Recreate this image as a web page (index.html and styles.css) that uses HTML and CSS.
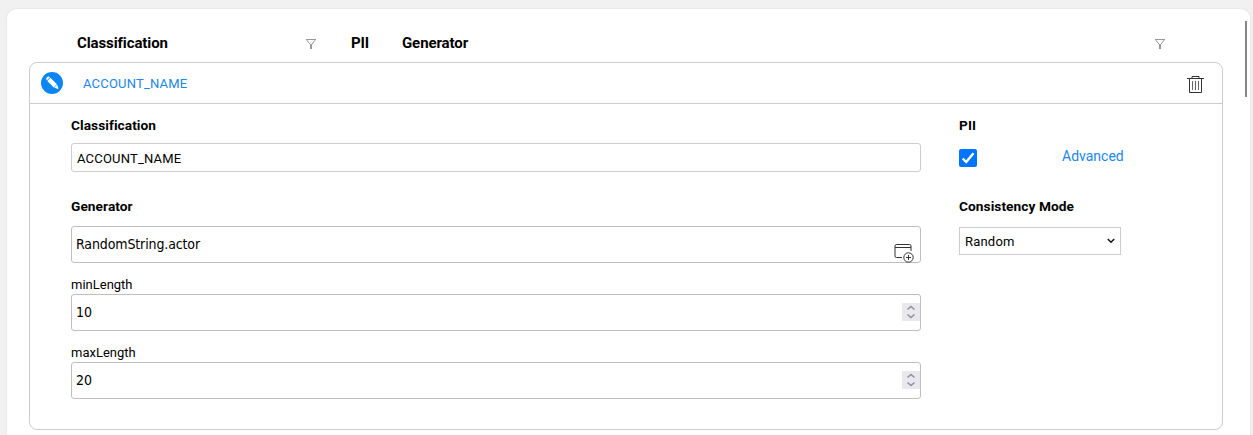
FILE: index.html
```
<!DOCTYPE html>
<html lang="en">

<head>
    <meta charset="UTF-8">
    <title>Classifications</title>
    <link rel="stylesheet" href="styles.css">
</head>

<body>
    <div class="panel">
        <div class="table-head">
            <span class="head-classification">Classification</span>
            <svg class="filter" viewBox="0 0 10 11"><path d="M0 .5h10M.8 1L4.2 5.5M9.2 1L5.8 5.5" /><path class="stem" d="M5 5V10" /></svg>
            <span class="head-pii">PII</span>
            <span class="head-generator">Generator</span>
            <svg class="filter" viewBox="0 0 10 11"><path d="M0 .5h10M.8 1L4.2 5.5M9.2 1L5.8 5.5" /><path class="stem" d="M5 5V10" /></svg>
        </div>
        <div class="item">
            <div class="item-head">
                <svg class="edit" viewBox="0 0 22 22">
                    <circle cx="11" cy="11" r="11" fill="#0d86f5" />
                    <g transform="translate(11.5 11) rotate(45)" fill="#fff">
                        <path d="M-8 0a2.2 2.2 0 0 1 2.2-2.2V2.2A2.2 2.2 0 0 1-8 0z" />
                        <path d="M-5.1-2.2H4V2.2H-5.1z" />
                        <path d="M4.5-2L8-.6V.6L4.5 2z" />
                    </g>
                </svg>
                <a class="item-name">ACCOUNT_NAME</a>
                <svg class="trash" viewBox="0 0 17 19">
                    <path d="M0 3.5h17M5 3V1.5h7V3M2.5 4v13.5h12V4" />
                    <path class="bars" d="M5.5 6v9M8.5 6v9M11.5 6v9" />
                </svg>
            </div>
            <div class="item-body">
                <div class="col-main">
                    <label class="label">Classification</label>
                    <input class="field name-field" type="text" value="ACCOUNT_NAME">
                    <label class="label label-generator">Generator</label>
                    <div class="field actor">
                        <span>RandomString.actor</span>
                        <svg class="pick" viewBox="0 0 20 20">
                            <path d="M8 14.5H2.5A1.5 1.5 0 0 1 1 13V3a1.5 1.5 0 0 1 1.5-1.5h13A1.5 1.5 0 0 1 17 3v5M1 4.5h16" />
                            <circle cx="14.5" cy="14.5" r="4.7" />
                            <path d="M12 14.5h5M14.5 12v5" />
                        </svg>
                    </div>
                    <label class="param">minLength</label>
                    <div class="field number">
                        <span>10</span>
                        <svg class="spin" viewBox="0 0 18 18"><path d="M5.5 6.5L9 3.5l3.5 3M5.5 11.5l3.5 3 3.5-3" /></svg>
                    </div>
                    <label class="param">maxLength</label>
                    <div class="field number">
                        <span>20</span>
                        <svg class="spin" viewBox="0 0 18 18"><path d="M5.5 6.5L9 3.5l3.5 3M5.5 11.5l3.5 3 3.5-3" /></svg>
                    </div>
                </div>
                <div class="col-side">
                    <label class="label">PII</label>
                    <div class="pii-row">
                        <svg class="check" viewBox="0 0 18 18"><rect width="18" height="18" rx="2" /><path d="M3.7 9.5l3.5 3.5 7.3-8.8" /></svg>
                        <a class="advanced">Advanced</a>
                    </div>
                    <label class="label label-mode">Consistency Mode</label>
                    <div class="select">
                        <span>Random</span>
                        <svg class="arrow" viewBox="0 0 8 6"><path d="M0.8 1l3.2 3.2L7.2 1" /></svg>
                    </div>
                </div>
            </div>
        </div>
        <div class="scrollbar"></div>
    </div>
</body>

</html>
```
FILE: styles.css
```
* {
    box-sizing: border-box;
}

body {
    margin: 0;
    height: 435px;
    padding: 9px 3px 0 7px;
    overflow: hidden;
    background: #f1f1f1;
    font-family: Roboto, sans-serif;
    font-size: 13px;
    color: #000;
}

svg {
    display: block;
    flex: none;
    fill: none;
}

.panel {
    position: relative;
    height: 426px;
    padding: 0 27px 0 22px;
    background: #fff;
    border-radius: 9px 9px 0 0;
    box-shadow: 0 0 2px rgba(0, 0, 0, 0.12);
}

.table-head {
    display: flex;
    align-items: center;
    height: 53px;
    padding: 15px 58px 0 48px;
    font-size: 15px;
    font-weight: bold;
    letter-spacing: -0.1px;
}

.head-classification {
    width: 229px;
}

.head-pii {
    width: 51px;
    margin-left: 35px;
}

.head-generator {
    flex: 1;
}

.filter {
    width: 10px;
    height: 11px;
    margin-top: 2px;
    stroke: #999;
}

.filter .stem {
    stroke-width: 2;
}

.item {
    height: 368px;
    border: 1px solid #ccc;
    border-radius: 8px;
}

.item-head {
    display: flex;
    align-items: center;
    height: 41px;
    padding: 0 18px 0 11px;
    border-bottom: 1px solid #ccc;
}

.edit {
    width: 22px;
    height: 22px;
}

.item-name {
    flex: 1;
    margin-left: 20px;
    letter-spacing: 0.2px;
    color: #1a86ee;
}

.trash {
    width: 17px;
    height: 19px;
    margin-top: 2px;
    stroke: #333;
}

.trash .bars {
    stroke: #666;
}

.item-body {
    display: flex;
    padding: 13px 0 0 41px;
}

.col-main {
    width: 850px;
    margin-right: 38px;
}

.col-side {
    width: 170px;
}

.label {
    display: block;
    height: 26px;
    line-height: 17px;
    font-size: 13.7px;
    font-weight: bold;
    letter-spacing: 0.06px;
}

.label-generator {
    margin-top: 26px;
    height: 28px;
}

.field {
    display: flex;
    width: 100%;
    border: 1px solid #bfbfbf;
    border-radius: 3px;
    background: #fff;
}

.name-field {
    height: 29px;
    padding: 2px 5px 0;
    border-color: #ccc;
    font: 13px Roboto, sans-serif;
    letter-spacing: 0.2px;
    color: #000;
}

.actor,
.number {
    justify-content: space-between;
    align-items: center;
    height: 37px;
    padding-left: 4px;
    font-family: "DejaVu Sans Condensed", "DejaVu Sans", sans-serif;
    font-size: 14px;
    font-stretch: condensed;
    letter-spacing: -0.12px;
}

.actor span,
.number span {
    margin-top: -2px;
}

.pick {
    width: 20px;
    height: 20px;
    margin: 16px 6px 0 0;
    stroke: #333;
}

.param {
    display: block;
    height: 31px;
    padding-top: 14px;
    line-height: 16px;
}

.spin {
    width: 18px;
    height: 18px;
    margin-top: -1px;
    background: #e9e9ed;
    stroke: #8f8f9d;
    stroke-width: 1.5;
}

.pii-row {
    display: flex;
    height: 55px;
    padding-top: 6px;
}

.check {
    width: 18px;
    height: 18px;
    stroke: #fff;
    stroke-width: 2.4;
}

.check rect {
    fill: #0075ff;
    stroke: none;
}

.advanced {
    margin: -1px 0 0 85px;
    line-height: 16px;
    font-size: 14px;
    color: #1a86ee;
}

.label-mode {
    height: 29px;
}

.select {
    display: flex;
    align-items: center;
    justify-content: space-between;
    width: 162px;
    height: 28px;
    padding: 0 5px;
    border: 1px solid #ccc;
    letter-spacing: 0.2px;
}

.arrow {
    width: 8px;
    height: 6px;
    stroke: #111;
    stroke-width: 1.5;
}

/* lies over the panel edge */
.scrollbar {
    position: absolute;
    top: 12px;
    right: 3px;
    width: 2px;
    height: 76px;
    background: #858585;
}
```
